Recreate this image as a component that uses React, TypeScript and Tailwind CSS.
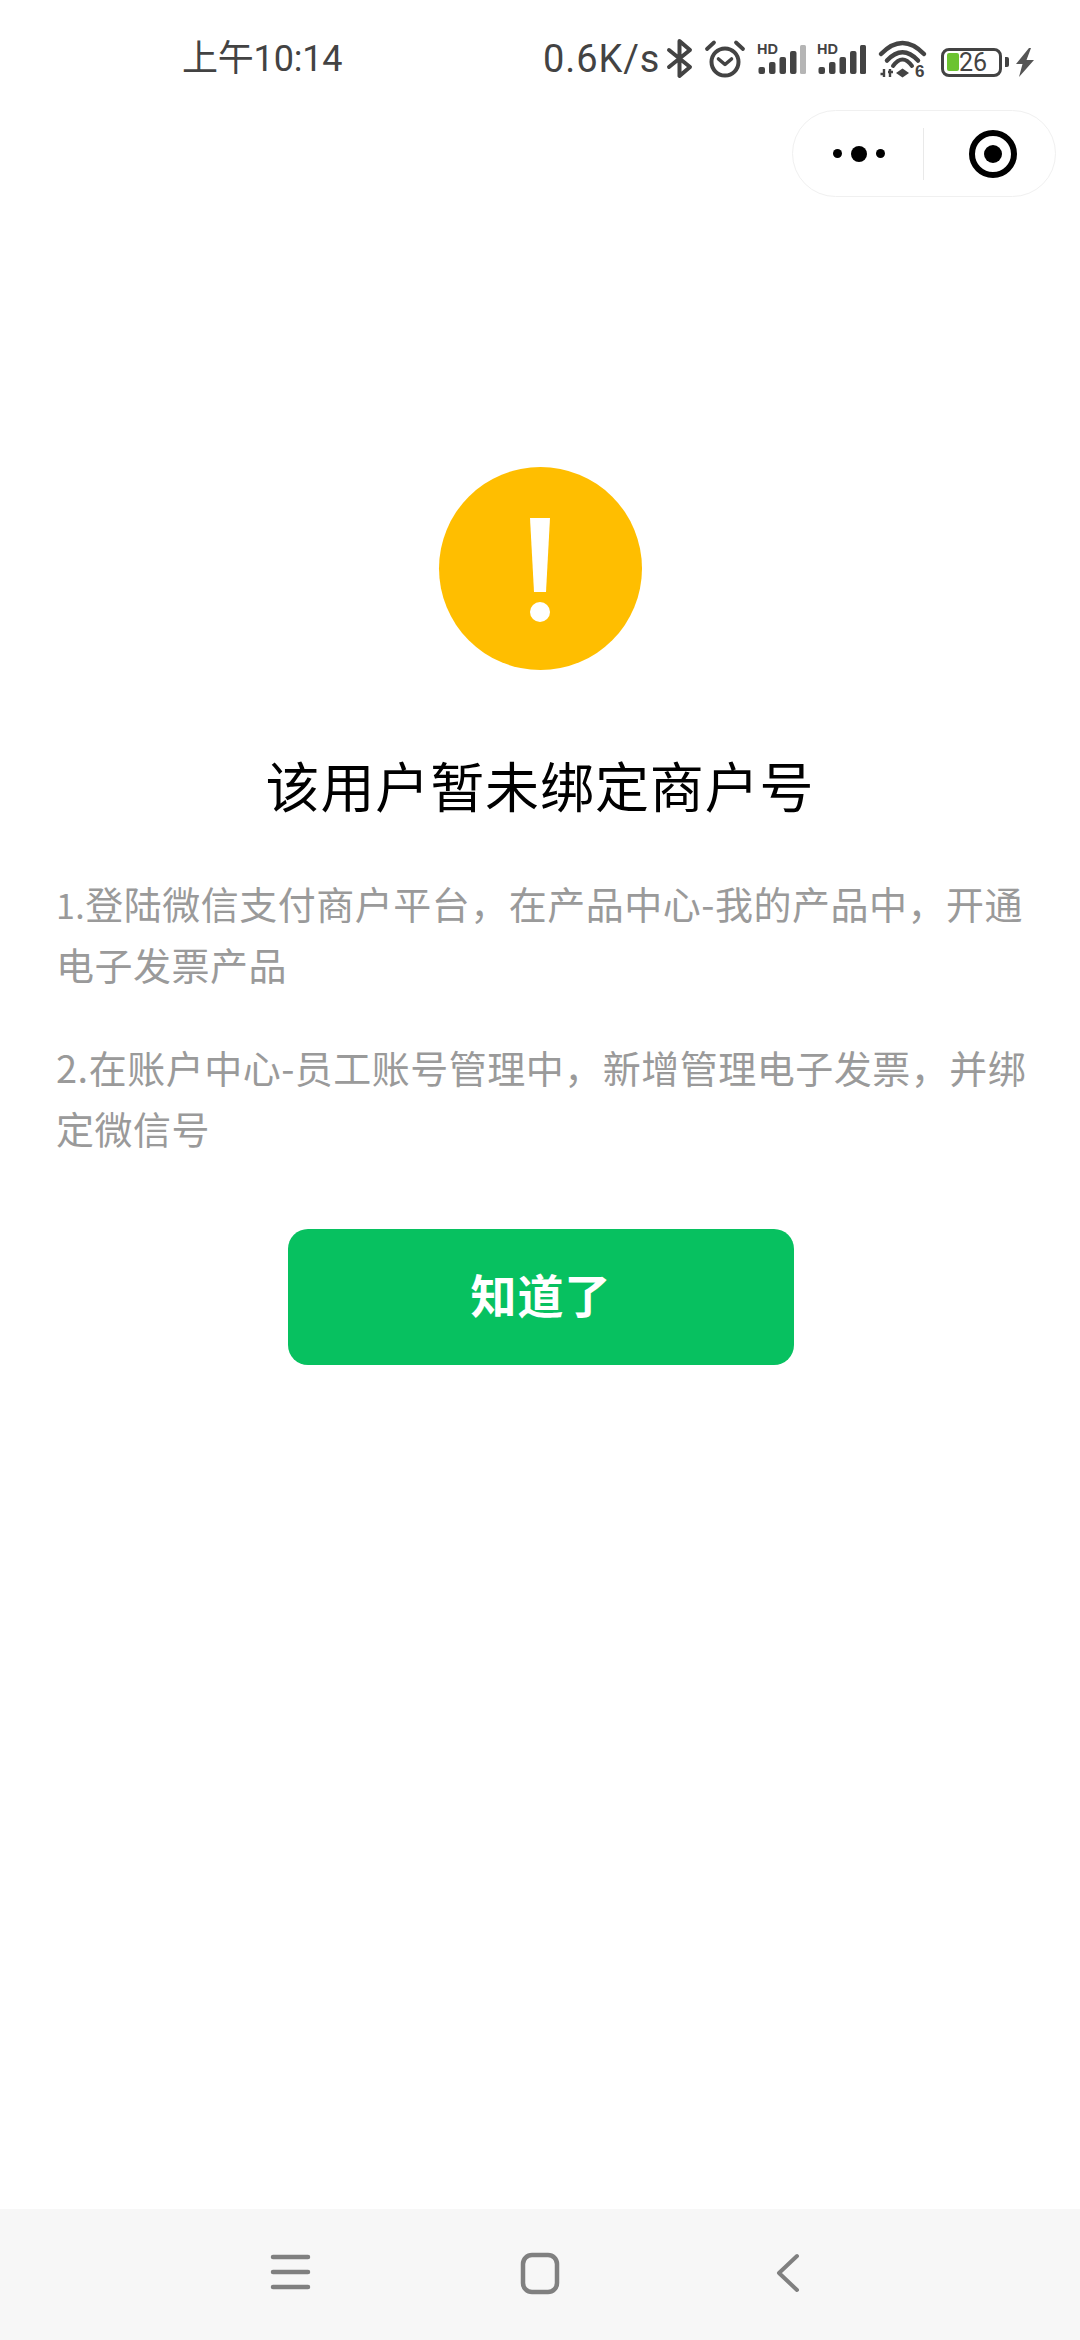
const cjk = "font-['Noto_Sans_CJK_SC','Noto_Sans',sans-serif]";
const c = "#434343";

function Signal({ x, last }: { x: number; last: string }) {
  return (
    <g transform={`translate(${x} 0)`}>
      <text x="0" y="21" fontFamily="Liberation Sans" fontWeight="700" fontSize="14.5" fill={c}>HD</text>
      <rect x="1.5" y="34" width="6.5" height="7" rx="2" fill={c} />
      <rect x="12" y="29" width="6.5" height="12" rx="2" fill={c} />
      <rect x="22.5" y="24" width="6.5" height="17" rx="2" fill={c} />
      <rect x="33" y="18" width="6.5" height="23" rx="2" fill={c} />
      <rect x="43" y="12" width="6" height="29" rx="1.5" fill={last} />
    </g>
  );
}

function StatusIcons() {
  return (
    <svg width="281" height="50" viewBox="0 0 281 50" className="block shrink-0" fill="none">
      {/* bluetooth */}
      <path d="M9 17 L30 34 L19.5 43 V8 L30 17 L9 34" stroke={c} strokeWidth="4" strokeLinejoin="round" strokeLinecap="round" />
      {/* alarm */}
      <circle cx="65" cy="29" r="13.5" stroke={c} strokeWidth="4" />
      <path d="M58.5 26 L65 31.5 L71.5 26" stroke={c} strokeWidth="3.6" strokeLinecap="round" strokeLinejoin="round" />
      <path d="M47 16 L54 9.5" stroke={c} strokeWidth="3.8" strokeLinecap="round" />
      <path d="M83 16 L76 9.5" stroke={c} strokeWidth="3.8" strokeLinecap="round" />
      <Signal x={97} last="#b5b5b5" />
      <Signal x={157} last={c} />
      {/* wifi */}
      <path d="M221 21 Q242.5 -1 264 21" stroke={c} strokeWidth="4.5" strokeLinecap="round" />
      <path d="M227 27.5 Q242.5 11 258 27.5" stroke={c} strokeWidth="4.5" strokeLinecap="round" />
      <path d="M233 33 Q242.5 20 252 33" stroke={c} strokeWidth="4" strokeLinecap="round" />
      <path d="M236 40 L242.5 35.5 L249 40 L242.5 44.5Z" fill={c} />
      <path d="M224 36 V44 M220.5 41 H225 M230 36 V44 M228 39 H233" stroke={c} strokeWidth="2.4" />
      <text x="255" y="44" fontFamily="Liberation Sans" fontWeight="700" fontSize="17" fill={c}>6</text>
    </svg>
  );
}

function Battery() {
  return (
    <div className="flex items-center h-[50px] pt-[8px] shrink-0">
      <div className="w-[61px] h-[29px] rounded-[8px] border-[3px] border-[#434343] flex items-center pl-[3px]">
        <div className="w-[12px] h-[18px] bg-[#6cc331] rounded-[2px]" />
        <span className="text-[25px] leading-none text-[#434343] font-['Roboto',sans-serif]">26</span>
      </div>
      <div className="ml-[3px] w-[4px] h-[10px] bg-[#434343] rounded-r-[2px]" />
      <svg width="18" height="29" viewBox="0 0 18 29" className="ml-[7px]">
        <path d="M13 0 L0 16 L6.5 16 L3 29 L18 12 L10.5 12 L15 0Z" fill="#555" />
      </svg>
    </div>
  );
}

function Capsule() {
  return (
    <div className="flex items-center w-[264px] h-[87px] rounded-full border border-[#f0f0f0] bg-white">
      <div className="flex items-center justify-center gap-[9px] w-[130px] pl-[2px]">
        <span className="w-[9px] h-[9px] rounded-full bg-black" />
        <span className="w-[16px] h-[16px] rounded-full bg-black" />
        <span className="w-[9px] h-[9px] rounded-full bg-black" />
      </div>
      <div className="w-px h-[52px] bg-[#e9e9e9]" />
      <div className="flex-1 flex items-center justify-center pl-[6px]">
        <div className="w-[48px] h-[48px] rounded-full border-[6px] border-black flex items-center justify-center">
          <div className="w-[18px] h-[18px] rounded-full bg-black" />
        </div>
      </div>
    </div>
  );
}

export default function App() {
  return (
    <div className={`w-[1080px] h-[2340px] bg-white flex flex-col ${cjk}`}>
      <header className="h-[110px] flex items-start pl-[182px] pt-[33px] text-[#434343] font-['Roboto','Noto_Sans_CJK_SC',sans-serif]">
        <span className="mt-[1px] text-[36px] leading-[50px] w-[361px] whitespace-nowrap tracking-[-0.2px]">上午10:14</span>
        <span className="mt-[1px] text-[38px] leading-[50px] w-[117px] whitespace-nowrap tracking-[0.9px]">0.6K/s</span>
        <StatusIcons />
        <Battery />
      </header>
      <div className="flex justify-end pr-[24px]">
        <Capsule />
      </div>
      <main className="flex flex-col items-center pl-[56px] pr-[40px]">
        <div className="mr-[16px] mt-[270px] w-[203px] h-[203px] rounded-full bg-[#ffbe00] flex flex-col items-center pt-[51px]">
          <svg width="24" height="104" viewBox="0 0 24 104">
            <path d="M2 0 H22 L18 74 H6Z" fill="#fff" />
            <circle cx="12" cy="94" r="10" fill="#fff" />
          </svg>
        </div>
        <h1 className="mr-[16px] mt-[79px] text-[54px] leading-[72px] font-normal text-black whitespace-nowrap tracking-[0.9px]">该用户暂未绑定商户号</h1>
        <div className="mt-[51px] w-full text-[38px] leading-[61px] text-[#9a9a9a] tracking-[0.5px]">
          <p><span className="text-[34px] leading-none">1.</span>登陆微信支付商户平台，在产品中心-我的产品中，开通<br />电子发票产品</p>
          <p className="mt-[42px]">2.在账户中心-员工账号管理中，新增管理电子发票，并绑<br />定微信号</p>
        </div>
        <button className="mr-[14px] mt-[71px] w-[506px] h-[136px] rounded-[20px] bg-[#07c160] text-white text-[46px] font-bold leading-none tracking-[1px] pb-[9px]">知道了</button>
      </main>
      <nav className="mt-auto h-[131px] bg-[#f7f7f7]">
        <svg width="1080" height="131" viewBox="0 0 1080 131" fill="none" stroke="#808080" strokeLinecap="round">
          <path d="M273 48 H308 M273 63 H308 M273 78 H308" strokeWidth="4.5" />
          <rect x="523" y="46" width="34" height="37" rx="9" strokeWidth="4.5" />
          <path d="M797 47 L779 64 L797 81" strokeWidth="4" strokeLinejoin="round" />
        </svg>
      </nav>
    </div>
  );
}
